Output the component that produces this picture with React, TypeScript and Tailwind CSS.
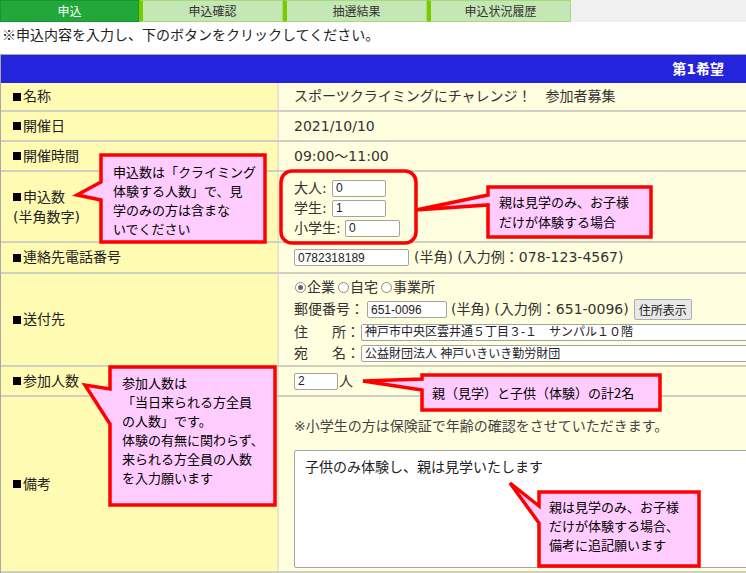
import React from 'react';

const tabs = ['申込確認', '抽選結果', '申込状況履歴'];

function Box({ className = '', children }: { className?: string; children?: React.ReactNode }) {
  return (
    <span
      className={`inline-flex items-center h-[17px] border border-[#a3a3a3] rounded-[2px] bg-white pl-[3px] text-[12px] leading-none text-[#222] shrink-0 font-['Liberation_Sans','Noto_Sans_CJK_JP',sans-serif] ${className}`}
    >
      {children}
    </span>
  );
}

function Radio({ checked }: { checked?: boolean }) {
  return (
    <span className="inline-flex items-center justify-center w-[11px] h-[11px] rounded-full border border-[#8a8a8a] bg-white mr-[1px] shrink-0">
      {checked && <span className="w-[5px] h-[5px] rounded-full bg-[#666]" />}
    </span>
  );
}

function Label({ text }: { text: string }) {
  return (
    <span className="flex items-center">
      <span className="w-[8px] h-[8px] bg-black mr-[2px]" />
      {text}
    </span>
  );
}

function Row({ height, label, children, valueClass = 'items-center' }: {
  height: string;
  label: React.ReactNode;
  children: React.ReactNode;
  valueClass?: string;
}) {
  return (
    <div className={`flex border-b-2 border-[#d0d0c2] ${height}`}>
      <div className="w-[278px] shrink-0 bg-[#fffbb3] border-r-2 border-[#e8e6cc] flex items-center pl-[12px] text-[#222]">
        {label}
      </div>
      <div className={`flex-1 bg-[#fffede] pl-[15px] flex text-[#333] ${valueClass}`}>{children}</div>
    </div>
  );
}

export default function App() {
  return (
    <div className="relative w-[746px] h-[573px] overflow-hidden bg-white text-[14px] font-['DejaVu_Sans','Noto_Sans_CJK_JP',sans-serif]">
      {/* tabs */}
      <div className="flex h-[22px] bg-[#f0f0f0] font-['Noto_Sans_CJK_JP',sans-serif]">
        <div className="w-[139px] flex items-center justify-center bg-[#22a838] border border-[#1b9430] text-white text-[12px]">
          申込
        </div>
        {tabs.map(t => (
          <div
            key={t}
            className="w-[144px] flex items-center justify-center bg-[#c5e7b5] border border-[#a2dd78] border-l-[4px] border-l-[#77cc00] text-[#333] text-[12px]"
          >
            {t}
          </div>
        ))}
      </div>

      <p className="h-[32px] pl-[2px] pt-[1px] leading-[22px] text-[#222] font-['Noto_Sans_CJK_JP',sans-serif]">
        ※申込内容を入力し、下のボタンをクリックしてください。
      </p>

      {/* form table */}
      <div className="border-l border-[#a8a8a8]">
        <div className="h-[29px] border-t border-[#a8a8a8] bg-[#2424dc] flex items-center justify-end pr-[22px] text-white font-bold">
          第1希望
        </div>

        <Row height="h-[29px]" label={<Label text="名称" />}>
          スポーツクライミングにチャレンジ！　参加者募集
        </Row>
        <Row height="h-[30px]" label={<Label text="開催日" />}>
          2021/10/10
        </Row>
        <Row height="h-[30px]" label={<Label text="開催時間" />}>
          09:00～11:00
        </Row>
        <Row
          height="h-[71px]"
          label={
            <div className="leading-[20px]">
              <Label text="申込数" />
              <div>(半角数字)</div>
            </div>
          }
        >
          <div className="flex flex-col pt-[3px]">
            <div className="flex items-center h-[20px]">
              <span className="w-[38px]">大人:</span>
              <Box className="w-[54px]">0</Box>
            </div>
            <div className="flex items-center h-[20px]">
              <span className="w-[38px]">学生:</span>
              <Box className="w-[54px]">1</Box>
            </div>
            <div className="flex items-center h-[20px]">
              <span className="w-[51px]">小学生:</span>
              <Box className="w-[55px]">0</Box>
            </div>
          </div>
        </Row>
        <Row height="h-[31px]" label={<Label text="連絡先電話番号" />}>
          <Box className="w-[115px]">0782318189</Box>
          <span className="ml-[5px]">(半角) (入力例：078-123-4567)</span>
        </Row>
        <Row height="h-[93px]" label={<Label text="送付先" />} valueClass="flex-col pt-[2px]">
          <div className="flex items-center h-[22px] pl-[1px]">
            <Radio checked />
            <span>企業</span>
            <span className="w-[3px]" />
            <Radio />
            <span>自宅</span>
            <span className="w-[3px]" />
            <Radio />
            <span>事業所</span>
          </div>
          <div className="flex items-center h-[23px]">
            <span>郵便番号：</span>
            <Box className="w-[80px] ml-[3px]">651-0096</Box>
            <span className="ml-[4px]">(半角) (入力例：651-0096)</span>
            <span className="ml-[5px] h-[21px] w-[58px] flex items-center justify-center bg-[#e8e8e8] border border-[#adadad] rounded-[2px] text-[12px] text-[#222] font-['Noto_Sans_CJK_JP',sans-serif]">
              住所表示
            </span>
          </div>
          <div className="flex items-center h-[22px]">
            <span className="w-[67px] flex justify-between pr-[1px]">
              <span>住</span>
              <span>所：</span>
            </span>
            <Box className="w-[420px]">神戸市中央区雲井通５丁目３-１　サンパル１０階</Box>
          </div>
          <div className="flex items-center h-[21px]">
            <span className="w-[67px] flex justify-between pr-[1px]">
              <span>宛</span>
              <span>名：</span>
            </span>
            <Box className="w-[420px]">公益財団法人 神戸いきいき勤労財団</Box>
          </div>
        </Row>
        <Row height="h-[30px]" label={<Label text="参加人数" />}>
          <Box className="w-[44px]">2</Box>
          <span className="ml-[1px]">人</span>
        </Row>
        <Row height="h-[176px]" label={<Label text="備考" />} valueClass="flex-col">
          <div className="pt-[19px] leading-[20px] text-[#444]">
            ※小学生の方は保険証で年齢の確認をさせていただきます。
          </div>
          <div className="mt-[14px] h-[118px] w-[470px] bg-white border border-[#a3a3a3] rounded-[2px] pl-[10px] pt-[6px] text-[#222]">
            子供のみ体験し、親は見学いたします
          </div>
        </Row>
      </div>

      {/* annotations */}
      <svg className="absolute left-0 top-0 pointer-events-none" width="746" height="573" viewBox="0 0 746 573">
        <g stroke="#ff0000" strokeWidth="3.5" strokeLinejoin="miter">
          <rect x="281" y="171" width="135" height="72" rx="11" fill="none" />
          <path d="M101,155 H265 V242 H101 V200 L77,195 L101,182 Z" fill="#ffccff" />
          <path d="M488,187 H651 V237 H488 V205 L416,210 L488,195 Z" fill="#ffccff" />
          <path d="M422,375 H660 V410 H422 V390 L363,381 L422,379 Z" fill="#ffccff" />
          <path d="M110,367 H275 V505 H110 V424 L85,385 L110,389 Z" fill="#ffccff" />
          <path d="M539,492 H699 V566 H539 V523 L510,483 L539,506 Z" fill="#ffccff" />
        </g>
      </svg>

      <div className="font-['Noto_Sans_CJK_JP',sans-serif] text-[13px] leading-[19px] text-black whitespace-nowrap">
        <div className="absolute left-[113px] top-[162px]">
          申込数は「クライミング<br />体験する人数」で、見<br />学のみの方は含まな<br />いでください
        </div>
        <div className="absolute left-[499px] top-[192px] leading-[20px]">
          親は見学のみ、お子様<br />だけが体験する場合
        </div>
        <div className="absolute left-[432px] top-[383px]">
          親（見学）と子供（体験）の計2名
        </div>
        <div className="absolute left-[122px] top-[373px]">
          参加人数は<br />「当日来られる方全員<br />の人数」です。<br />体験の有無に関わらず、<br />来られる方全員の人数<br />を入力願います
        </div>
        <div className="absolute left-[549px] top-[497px]">
          親は見学のみ、お子様<br />だけが体験する場合、<br />備考に追記願います
        </div>
      </div>
    </div>
  );
}
